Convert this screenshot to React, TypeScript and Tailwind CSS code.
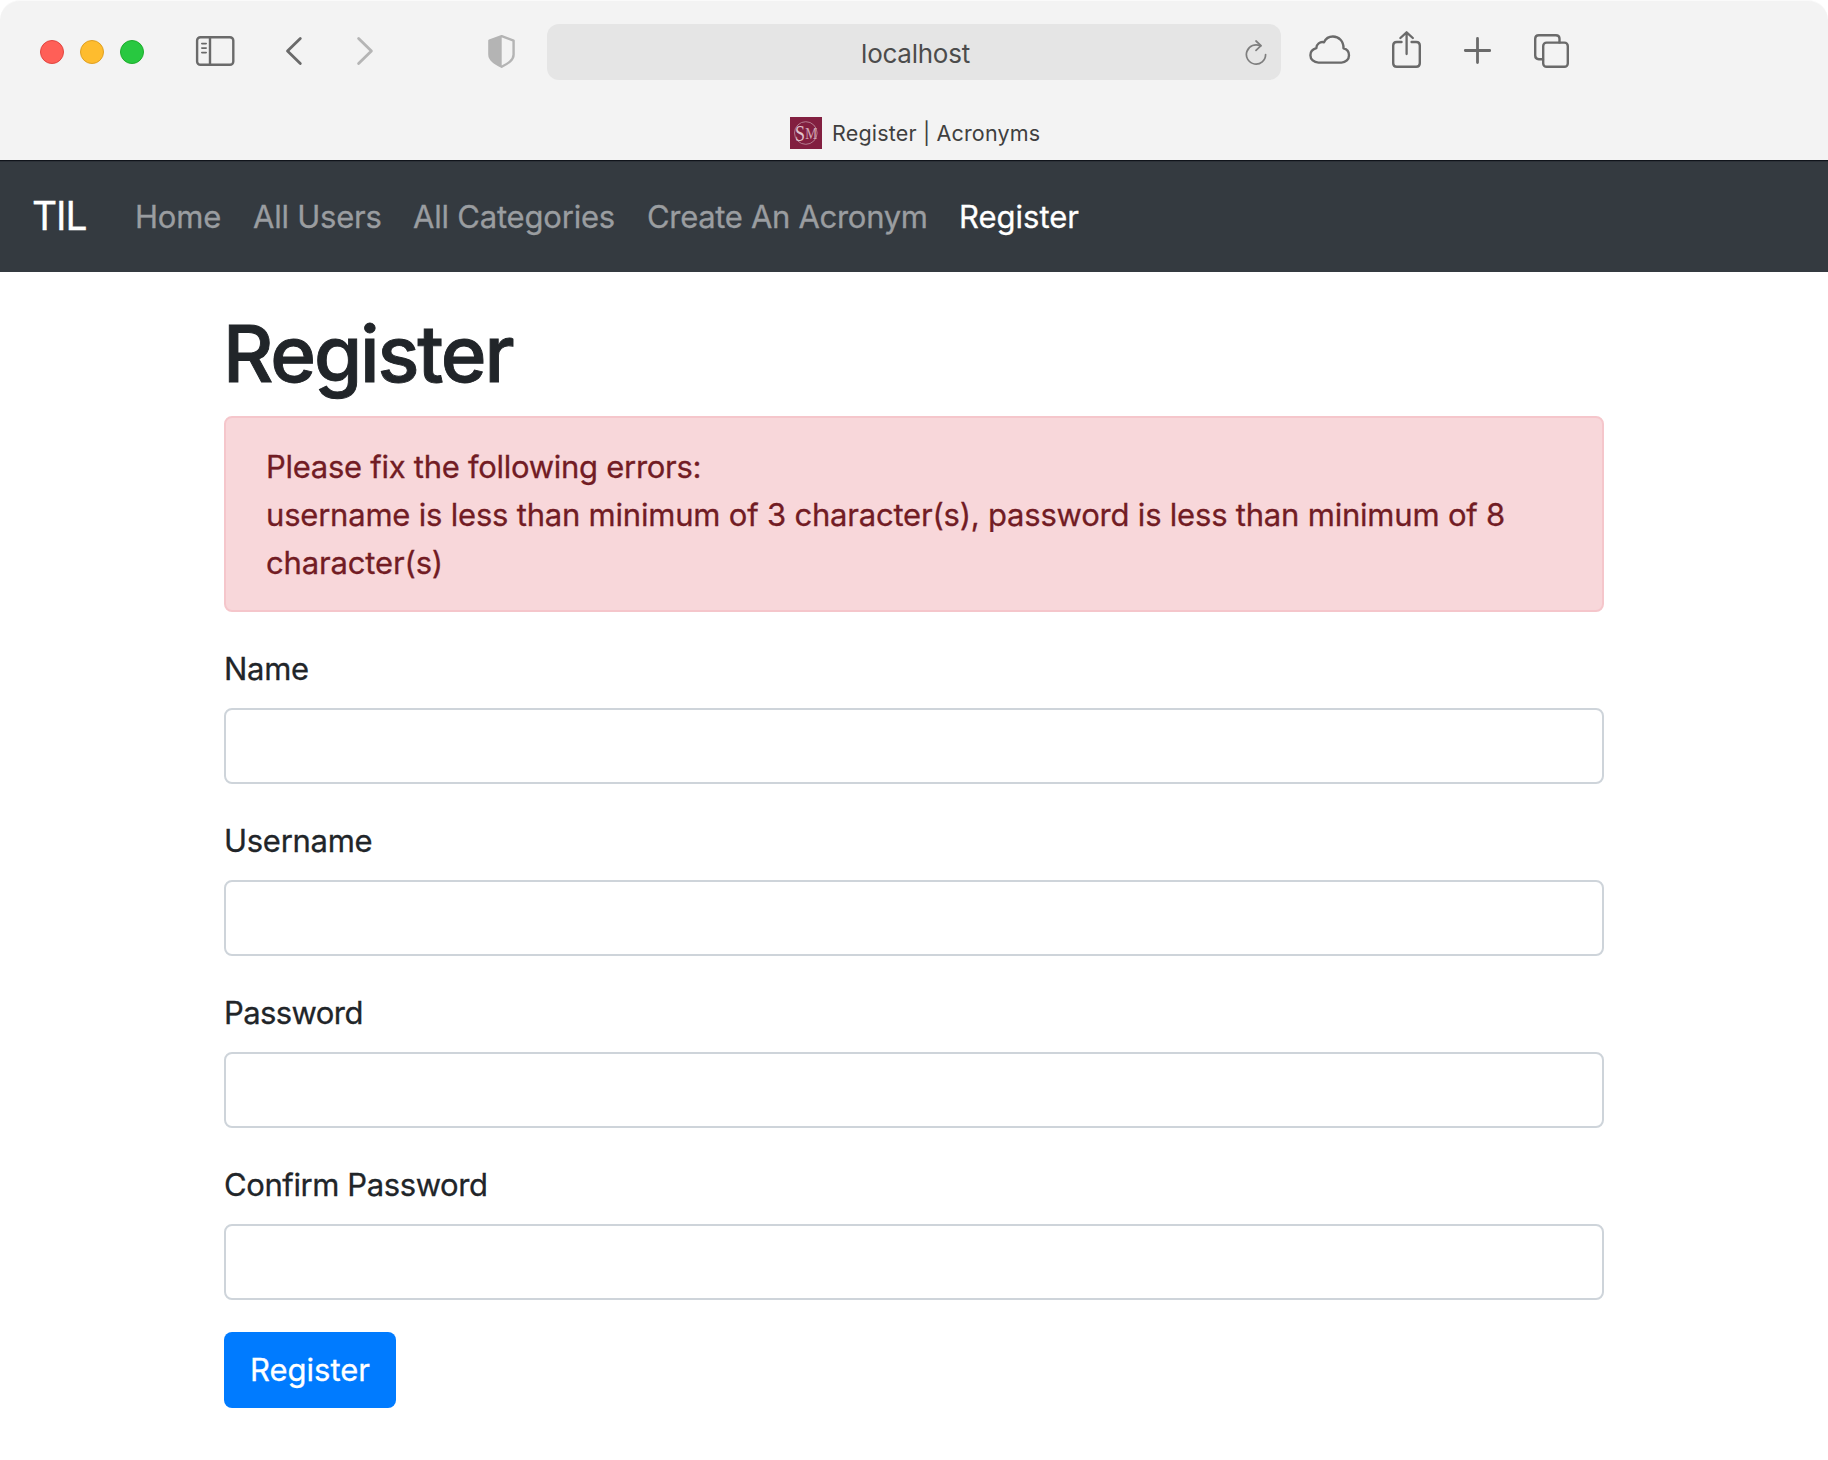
import type { ReactNode } from "react";

const ink = "#6a6a6a";

function Glyph({ w, h, className, children }: { w: number; h: number; className: string; children: ReactNode }) {
  return (
    <svg
      width={w}
      height={h}
      viewBox={`0 0 ${w} ${h}`}
      fill="none"
      stroke={ink}
      strokeWidth={2.4}
      strokeLinecap="round"
      strokeLinejoin="round"
      className={`block shrink-0 ${className}`}
    >
      {children}
    </svg>
  );
}

function Toolbar() {
  return (
    <div className="flex h-[104px] items-start">
      <div className="mt-10 ml-10 flex gap-4">
        <span className="h-6 w-6 rounded-full border border-[#e14640] bg-[#ff5f57]" />
        <span className="h-6 w-6 rounded-full border border-[#dfa023] bg-[#febc2e]" />
        <span className="h-6 w-6 rounded-full border border-[#1dad2b] bg-[#28c840]" />
      </div>

      {/* Sidebar */}
      <Glyph w={40} h={30} className="mt-9 ml-[51px]">
        <rect x="2.1" y="1.2" width="36.2" height="27.6" rx="3.4" />
        <path d="M15 1.5v27" />
        <path d="M6.8 7.6h4.4M6.8 12.1h4.4M6.8 16.6h4.4" strokeWidth="1.6" />
      </Glyph>
      {/* Back and forward */}
      <Glyph w={20} h={30} className="mt-9 ml-12">
        <path d="M17.3 2.4L4.5 15L17.3 27.6" strokeWidth="2.8" />
      </Glyph>
      <Glyph w={20} h={30} className="mt-9 ml-[52px]">
        <path d="M3.6 2.4L16.4 15L3.6 27.6" stroke="#b5b5b5" strokeWidth="2.8" />
      </Glyph>
      {/* Privacy shield */}
      <Glyph w={28} h={34} className="mt-[34px] ml-[113px]">
        <path d="M13.7 2.1L25.6 6.6V20.5C25.6 26 20.5 29.2 13.7 32.8C7 29.2 1.4 26 1.4 20.5V6.6Z" stroke="#b4b4b4" />
        <path d="M13.7 2.1L1.4 6.6V20.5C1.4 26 7 29.2 13.7 32.8Z" fill="#b4b4b4" stroke="none" />
      </Glyph>

      <div className="mt-6 ml-[31px] flex h-14 w-[734px] items-center rounded-xl bg-[#e5e5e5]">
        <span className="w-[699px] pt-[3px] pl-[38px] text-center text-[26px] leading-none tracking-[-0.25px] text-[#4c4c4c]">
          localhost
        </span>
      </div>
      <Glyph w={24} h={26} className="mt-10 -ml-9">
        <path d="M20.6 14.5A9.6 9.6 0 1 1 15.6 6.1" stroke="#7e7e7e" strokeWidth="1.7" />
        <path d="M11 1L16 5.6L11 10.3" stroke="#7e7e7e" strokeWidth="1.7" />
      </Glyph>

      {/* Cloud tabs */}
      <Glyph w={42} h={30} className="mt-[35px] ml-10">
        <path d="M9.5 27.6C4.9 27.6 1.4 24.4 1.4 20.2C1.4 16.8 3.7 14.2 7.3 13.2C7.2 9.2 11.2 6.2 15 7.3C16.7 3.7 19.9 1.5 23.9 1.5C29.9 1.5 34.7 6.3 34.5 13.3C38 14.1 40 16.7 40 20.2C40 24.4 36.7 27.6 32.5 27.6Z" />
      </Glyph>
      {/* Share */}
      <Glyph w={30} h={38} className="mt-[31px] ml-[41px]">
        <path d="M9.5 11H4.8Q1.2 11 1.2 14.6V32.2Q1.2 35.8 4.8 35.8H24.2Q27.8 35.8 27.8 32.2V14.6Q27.8 11 24.2 11H19.6" />
        <path d="M14.6 23V1.6M8.4 7L14.6 1.3L20.8 7" strokeWidth="2.3" />
      </Glyph>
      {/* New tab */}
      <Glyph w={28} h={28} className="mt-[37px] ml-[41px]">
        <path d="M14.5 1.4V25.6M2.3 13.5H26.7" strokeWidth="2.8" />
      </Glyph>
      {/* Tab overview */}
      <Glyph w={36} h={34} className="mt-[34px] ml-[43px]">
        <rect x="9.2" y="8.6" width="24.6" height="24.2" rx="3.4" />
        <path d="M9 25.2H4.8Q1.2 25.2 1.2 21.6V4.8Q1.2 1.2 4.8 1.2H21.9Q25.5 1.2 25.5 4.8V8.4" />
      </Glyph>
    </div>
  );
}

function TabTitle() {
  return (
    <div className="flex h-14 items-start pt-[13px] pl-[790px]">
      <svg width="32" height="32" viewBox="0 0 32 32" className="block shrink-0 bg-[#821f40]">
        <circle cx="15.8" cy="16" r="11.3" fill="none" stroke="#b98496" strokeWidth="0.9" />
        <text x="5" y="23.5" fontFamily="Liberation Serif" fontSize="24" textLength="10" lengthAdjust="spacingAndGlyphs" fill="#e0c3cd">
          S
        </text>
        <text x="15.2" y="21.5" fontFamily="Liberation Serif" fontSize="17" textLength="12" lengthAdjust="spacingAndGlyphs" fill="#cfa5b3">
          M
        </text>
      </svg>
      <span className="ml-2.5 text-[21.5px] leading-8 tracking-[0.18px] whitespace-nowrap text-[#3f3f3f]">
        Register | Acronyms
      </span>
    </div>
  );
}

const links = [
  { label: "Home", style: "w-[86px] tracking-[-0.2px]" },
  { label: "All Users", style: "w-[128px] tracking-[-0.22px]" },
  { label: "All Categories", style: "w-[202px] tracking-[-0.2px]" },
  { label: "Create An Acronym", style: "w-[280px] tracking-[-0.31px]" },
  { label: "Register", style: "w-[120px] text-white" },
];

function Navbar() {
  return (
    <nav className="flex h-28 items-center border-t border-[#10141b] bg-[#343a40] pt-px pl-8 text-[31px] text-[#9a9da0] shadow-[inset_0_1px_0_#2b3037]">
      <span className="w-[103px] pb-0.5 text-[39px] tracking-[-1.1px] text-white">TIL</span>
      <div className="flex gap-8">
        {links.map((l) => (
          <a key={l.label} className={`whitespace-nowrap ${l.style}`}>
            {l.label}
          </a>
        ))}
      </div>
    </nav>
  );
}

function Field({ label, spacing }: { label: string; spacing: string }) {
  return (
    <div className="mb-8">
      <label className={`mb-4 block h-12 leading-[50px] ${spacing}`}>{label}</label>
      <input className="block h-[76px] w-full rounded-lg border-2 border-[#ced4da] bg-white px-6" />
    </div>
  );
}

export default function App() {
  return (
    <div className="h-[1460px] w-[1828px] overflow-hidden bg-white font-['Inter',sans-serif] text-[31px] text-[#212529] [-webkit-text-stroke:0.3px]">
      <header className="h-40 rounded-t-[20px] border-t border-[#fafafa] bg-[#f3f3f3] [-webkit-text-stroke:0]">
        <div className="-mt-px">
          <Toolbar />
          <TabTitle />
        </div>
      </header>
      <Navbar />
      <main className="mx-auto w-[1380px] pt-8">
        <h1 className="mb-4 -ml-px h-24 text-[78px] leading-[100px] font-medium tracking-[-2.2px] [-webkit-text-stroke:0.9px]">
          Register
        </h1>
        <div className="mb-8 h-[196px] rounded-lg border-2 border-[#f5c6cb] bg-[#f8d7da] pt-[25px] pl-10 leading-[48px] whitespace-nowrap text-[#721c24]">
          <p className="tracking-[-0.28px]">Please fix the following errors:</p>
          <p className="tracking-[-0.205px]">
            username is less than minimum of 3 character(s), password is less than minimum of 8
          </p>
          <p className="tracking-[-0.15px]">character(s)</p>
        </div>
        <form>
          <Field label="Name" spacing="tracking-[-0.3px]" />
          <Field label="Username" spacing="tracking-[-0.28px]" />
          <Field label="Password" spacing="tracking-[-0.58px]" />
          <Field label="Confirm Password" spacing="tracking-[-0.4px]" />
          <button type="button" className="h-[76px] w-[172px] rounded-lg bg-[#007bff] pt-px text-white">
            Register
          </button>
        </form>
      </main>
    </div>
  );
}
